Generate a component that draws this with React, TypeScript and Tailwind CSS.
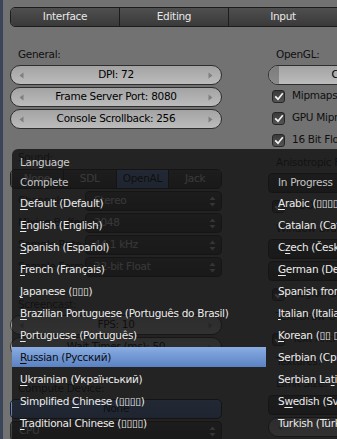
import React from "react";

const font = "font-['DejaVu_Sans','Liberation_Sans',sans-serif]";

function ArrowL() {
  return (
    <svg width="5" height="7" viewBox="0 0 5 7">
      <path d="M4.5 0.5 L0.5 3.5 L4.5 6.5Z" fill="#7e7e7e" />
    </svg>
  );
}
function ArrowR() {
  return (
    <svg width="5" height="7" viewBox="0 0 5 7">
      <path d="M0.5 0.5 L4.5 3.5 L0.5 6.5Z" fill="#7e7e7e" />
    </svg>
  );
}
function UpDown() {
  return (
    <svg width="7" height="11" viewBox="0 0 7 11">
      <path d="M3.5 0.5 L6.5 4 L0.5 4Z M0.5 7 L6.5 7 L3.5 10.5Z" fill="#cfcfcf" />
    </svg>
  );
}

function Slider({ label }: { label: string }) {
  return (
    <div className="h-[20px] rounded-full border border-[#2e2e2e] bg-gradient-to-b from-[#a3a3a3] to-[#bcbcbc] flex items-center justify-between px-[8px]">
      <ArrowL />
      <span className="text-black whitespace-nowrap">{label}</span>
      <ArrowR />
    </div>
  );
}

function Check({ label }: { label: string }) {
  return (
    <div className="h-[20px] flex items-center pl-[4px] gap-[7px]">
      <div className="w-[13px] h-[13px] shrink-0 rounded-[3px] border border-[#262626] bg-gradient-to-b from-[#3a3a3a] to-[#545454] flex items-center justify-center">
        <svg width="10" height="9" viewBox="0 0 10 9">
          <path d="M1.2 4.3 L4 7.2 L8.8 1.2" stroke="#f2f2f2" strokeWidth="1.7" fill="none" />
        </svg>
      </div>
      <span className="text-[#101010] whitespace-nowrap">{label}</span>
    </div>
  );
}

function Drop({ label, center = false }: { label: string; center?: boolean }) {
  return (
    <div className="h-[20px] flex-1 rounded-[4px] border border-[#262626] bg-gradient-to-b from-[#4a4a4a] to-[#3a3a3a] flex items-center pl-[8px] pr-[5px] text-[#e0e0e0]">
      <span className={center ? "flex-1 text-center whitespace-nowrap" : "flex-1 whitespace-nowrap"}>{label}</span>
      <UpDown />
    </div>
  );
}

function Label({ text }: { text: string }) {
  return <div className="h-[20px] leading-[20px] pl-[8px] text-[#101010] whitespace-nowrap">{text}</div>;
}

function LabeledDrop({ label, value }: { label: string; value: string }) {
  return (
    <div className="flex items-center h-[20px]">
      <div className="w-[75px] pl-[8px] text-[#101010] whitespace-nowrap overflow-hidden">{label}</div>
      <Drop label={value} />
    </div>
  );
}

type Item = { t: string; u?: number; hi?: boolean };

function ItemText({ t, u }: { t: string; u?: number }) {
  if (u === undefined) return <>{t}</>;
  return (
    <>
      {t.slice(0, u)}
      <span className="underline underline-offset-[2px]">{t.charAt(u)}</span>
      {t.slice(u + 1)}
    </>
  );
}

const left: Item[] = [
  { t: "Default (Default)", u: 0 },
  { t: "English (English)", u: 0 },
  { t: "Spanish (Español)", u: 0 },
  { t: "French (Français)", u: 0 },
  { t: "Japanese (▯▯▯)", u: 0 },
  { t: "Brazilian Portuguese (Português do Brasil)", u: 0 },
  { t: "Portuguese (Português)", u: 0 },
  { t: "Russian (Русский)", u: 0, hi: true },
  { t: "Ukrainian (Український)", u: 0 },
  { t: "Simplified Chinese (▯▯▯▯)", u: 11 },
  { t: "Traditional Chinese (▯▯▯▯)", u: 0 },
];

const right: Item[] = [
  { t: "Arabic (▯▯▯▯▯▯▯)", u: 0 },
  { t: "Catalan (Català)" },
  { t: "Czech (Český)", u: 1 },
  { t: "German (Deutsch)", u: 0 },
  { t: "Spanish from Latin America (Español de Latinoamerica)" },
  { t: "Italian (Italiano)", u: 0 },
  { t: "Korean (▯▯ ▯▯)", u: 0 },
  { t: "Serbian (Српски)" },
  { t: "Serbian Latin (Srpski latinica)", u: 10 },
  { t: "Swedish (Svenska)", u: 1 },
  { t: "Turkish (Türkçe)" },
];

export default function App() {
  return (
    <div className={`relative w-[337px] h-[439px] overflow-hidden bg-[#727272] flex text-[10.5px] tracking-[-0.3px] ${font}`}>
      <div className="w-[3px] shrink-0 bg-[#3a4559]" />
      <div className="flex-1 flex flex-col min-w-0">
        <div className="h-[3px] bg-[#3d3d3d]" />
        {/* tabs */}
        <div className="pt-[7px] pl-[7px] flex">
          <div className="flex h-[20px] rounded-l-[5px] border border-[#1c1c1c] overflow-hidden shrink-0">
            {["Interface", "Editing", "Input", "Add-Ons"].map((t, i) => (
              <div
                key={t}
                className={
                  i === 0
                    ? "w-[108px] bg-gradient-to-b from-[#4f4f4f] to-[#3a3a3a] text-[#e8e8e8] flex items-center justify-center"
                    : "w-[109px] border-l border-[#1c1c1c] bg-gradient-to-b from-[#4f4f4f] to-[#3a3a3a] text-[#e8e8e8] flex items-center justify-center"
                }
              >
                {t}
              </div>
            ))}
          </div>
        </div>
        {/* columns */}
        <div className="flex pl-[7px] gap-[46px] mt-[17px]">
          {/* left column */}
          <div className="w-[212px] shrink-0 flex flex-col">
            <Label text="General:" />
            <div className="mt-[1px] flex flex-col gap-[2px]">
              <Slider label="DPI: 72" />
              <Slider label="Frame Server Port: 8080" />
              <Slider label="Console Scrollback: 256" />
            </div>
            <div className="mt-[18px]">
              <Label text="Sound:" />
            </div>
            <div className="mt-[2px] flex h-[20px] rounded-[5px] border border-[#1c1c1c] overflow-hidden">
              {["None", "SDL", "OpenAL", "Jack"].map((t) => (
                <div
                  key={t}
                  className={
                    t === "OpenAL"
                      ? "flex-1 border-l border-[#1c1c1c] bg-gradient-to-b from-[#6a8fcc] to-[#5578b8] text-black flex items-center justify-center"
                      : t === "None"
                      ? "flex-1 bg-gradient-to-b from-[#4f4f4f] to-[#3a3a3a] text-[#e8e8e8] flex items-center justify-center"
                      : "flex-1 border-l border-[#1c1c1c] bg-gradient-to-b from-[#4f4f4f] to-[#3a3a3a] text-[#e8e8e8] flex items-center justify-center"
                  }
                >
                  {t}
                </div>
              ))}
            </div>
            <div className="mt-[2px] flex flex-col gap-[2px]">
              <LabeledDrop label="Channels:" value="Stereo" />
              <LabeledDrop label="Mixing Buffer:" value="2048" />
              <LabeledDrop label="Sample Rate:" value="44.1 kHz" />
              <LabeledDrop label="Sample Format:" value="32-bit Float" />
            </div>
            <div className="mt-[17px]">
              <Label text="Screencast:" />
            </div>
            <div className="mt-[1px] flex flex-col gap-[2px]">
              <Slider label="FPS: 10" />
              <Slider label="Wait Timer (ms): 50" />
            </div>
            <div className="mt-[21px]">
              <Label text="Compute Device:" />
            </div>
            <div className="mt-[1px] h-[20px] rounded-[5px] border border-[#1c1c1c] bg-gradient-to-b from-[#6a8fcc] to-[#5578b8] text-black flex items-center justify-center">
              None
            </div>
            <div className="mt-[2px] flex">
              <Drop label="CPU" />
            </div>
          </div>
          {/* right column */}
          <div className="w-[212px] shrink-0 flex flex-col">
            <Label text="OpenGL:" />
            <div className="mt-[1px] h-[20px] rounded-full border border-[#2e2e2e] bg-gradient-to-b from-[#a3a3a3] to-[#bcbcbc] overflow-hidden flex items-center relative">
              <div className="absolute left-0 top-0 bottom-0 w-[10px] bg-gradient-to-b from-[#7c7c7c] to-[#8a8a8a]" />
              <span className="relative w-full text-center text-black whitespace-nowrap">Clip Alpha: 0.004</span>
            </div>
            <div className="mt-[1px] flex flex-col gap-[2px]">
              <Check label="Mipmaps" />
              <Check label="GPU Mipmap Generation" />
              <Check label="16 Bit Float Textures" />
            </div>
            <div className="mt-[2px]">
              <Label text="Anisotropic Filtering" />
            </div>
            <div className="mt-[1px] flex">
              <Drop label="2x" center />
            </div>
            <div className="mt-[3px]">
              <Check label="VBOs" />
            </div>
            <div className="mt-[2px]">
              <Label text="Window Draw Method:" />
            </div>
            <div className="mt-[1px] flex flex-col gap-[2px]">
              <div className="flex"><Drop label="Automatic" center /></div>
              <div className="flex"><Drop label="No MultiSample" center /></div>
            </div>
            <div className="mt-[3px]">
              <Check label="Region Overlap" />
            </div>
            <div className="mt-[2px]">
              <Label text="Text Draw Options:" />
            </div>
            <div className="mt-[3px]">
              <Check label="Text Anti-aliasing" />
            </div>
            <div className="mt-[2px]">
              <Label text="Textures:" />
            </div>
            <div className="mt-[2px]">
              <Label text="Limit Size:" />
            </div>
            <div className="mt-[2px] flex">
              <Drop label="Off" center />
            </div>
            <div className="mt-[2px]">
              <Slider label="Time Out: 120" />
            </div>
          </div>
        </div>
      </div>

      {/* language menu overlay */}
      <div className="absolute left-[12px] top-[149px] w-[340px] h-[300px] rounded-tl-[6px] bg-[rgba(18,18,18,0.82)] flex pt-[3px]">
        <div className="w-[254px] shrink-0 flex flex-col">
          <div className="h-[20px] leading-[20px] pl-[8px] text-[#cdcdcd]">Language</div>
          <div className="h-[20px] leading-[20px] pl-[8px] text-[#c4c4c4]">Complete</div>
          <div className="mt-[1px] flex flex-col gap-[2px]">
            {left.map((it) => (
              <div
                key={it.t}
                className={
                  it.hi
                    ? "h-[20px] leading-[20px] pl-[8px] whitespace-nowrap bg-gradient-to-b from-[#8aaee2] to-[#5a81c4] text-[#0c0c0c]"
                    : "h-[20px] leading-[20px] pl-[8px] whitespace-nowrap text-[#ececec]"
                }
              >
                <ItemText t={it.t} u={it.u} />
              </div>
            ))}
          </div>
        </div>
        <div className="flex-1 flex flex-col pl-[12px] min-w-0 overflow-hidden">
          <div className="h-[20px]" />
          <div className="h-[20px] leading-[20px] text-[#c4c4c4] whitespace-nowrap">In Progress</div>
          <div className="mt-[1px] flex flex-col gap-[2px]">
            {right.map((it) => (
              <div key={it.t} className="h-[20px] leading-[20px] whitespace-nowrap text-[#ececec]">
                <ItemText t={it.t} u={it.u} />
              </div>
            ))}
          </div>
        </div>
      </div>
    </div>
  );
}
